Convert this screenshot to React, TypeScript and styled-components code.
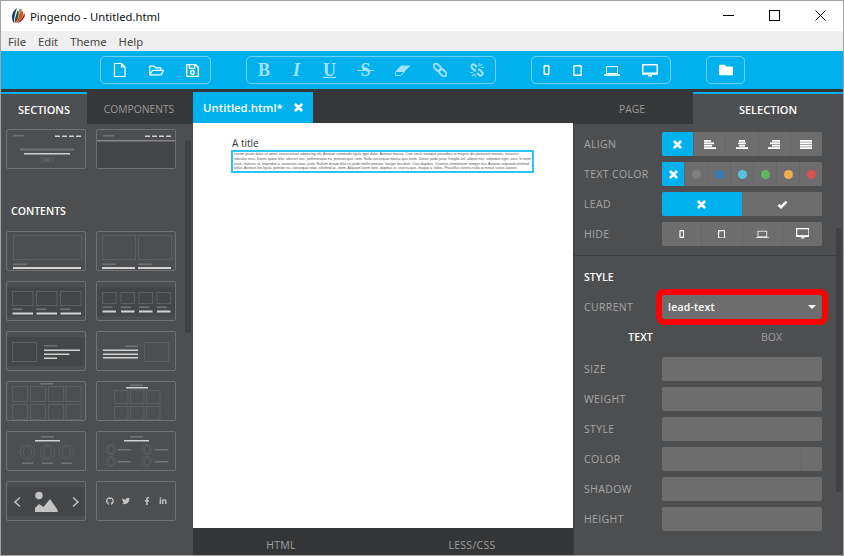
import React from 'react';
import styled, { createGlobalStyle } from 'styled-components';
import { FaFolder, FaGithub, FaFacebookF, FaLinkedinIn, FaRegFolderOpen, FaRegSave, FaTwitter } from 'react-icons/fa';

const GlobalStyle = createGlobalStyle`
  html, body {
    margin: 0;
    padding: 0;
    background: #fff;
  }
  * {
    box-sizing: border-box;
  }
`;

const Window = styled.div`
  width: 844px;
  height: 556px;
  display: flex;
  flex-direction: column;
  overflow: hidden;
  border: 1px solid #a3a3a3;
  font-family: 'Open Sans', sans-serif;
`;

const TitleBar = styled.div`
  height: 30px;
  flex: none;
  display: flex;
  align-items: center;
  background: #fff;
  padding-left: 10px;
  font-family: 'Noto Sans', sans-serif;
  font-size: 11.25px;
  color: #111;
`;

const TitleText = styled.span`
  margin-left: 5px;
  flex: 1;
`;

const WinButton = styled.div`
  width: 46px;
  height: 30px;
  padding-bottom: 2px;
  display: flex;
  align-items: center;
  justify-content: center;
`;

const MenuBar = styled.div`
  height: 20px;
  flex: none;
  display: flex;
  align-items: center;
  gap: 12px;
  padding-left: 7px;
  background: #efefef;
  font-family: 'Noto Sans', sans-serif;
  font-size: 11.25px;
  color: #444;
`;

const Toolbar = styled.div`
  height: 38px;
  flex: none;
  display: flex;
  align-items: center;
  gap: 35px;
  padding-left: 99px;
  background: #00b1ed;
`;

const ToolGroup = styled.div`
  height: 28px;
  display: flex;
  border: 1px solid rgba(255, 255, 255, 0.42);
  border-radius: 5px;
`;

const ToolButton = styled.div<{ $w: number; $off?: boolean }>`
  width: ${p => p.$w}px;
  display: flex;
  align-items: center;
  justify-content: center;
  color: ${p => (p.$off ? '#a3e2f8' : '#fff')};
`;

const SerifGlyph = styled.span<{ $italic?: boolean; $under?: boolean; $strike?: boolean }>`
  position: relative;
  font-family: 'Liberation Serif', serif;
  font-size: 18px;
  line-height: 18px;
  font-weight: 700;
  font-style: ${p => (p.$italic ? 'italic' : 'normal')};
  text-decoration: ${p => (p.$under ? 'underline' : 'none')};
  &::after {
    content: '';
    display: ${p => (p.$strike ? 'block' : 'none')};
    position: absolute;
    left: -3px;
    right: -3px;
    top: 9px;
    height: 1px;
    background: currentColor;
  }
`;

const Main = styled.div`
  flex: 1;
  min-height: 0;
  display: grid;
  grid-template-columns: 192px 380px 270px;
`;

const Column = styled.div`
  position: relative;
  display: flex;
  flex-direction: column;
  min-height: 0;
  background: #4d4e50;
`;

const TabRow = styled.div<{ $h: number }>`
  height: ${p => p.$h}px;
  flex: none;
  display: flex;
  background: #363739;
  padding-top: 3px;
`;

const PanelTab = styled.div<{ $w: number; $active?: boolean }>`
  width: ${p => p.$w}px;
  display: flex;
  align-items: center;
  justify-content: center;
  font-size: ${p => (p.$active ? 11 : 10.3)}px;
  padding: 0 ${p => (p.$active ? 0 : 2)}px ${p => (p.$active ? 0 : 1)}px 0;
  color: ${p => (p.$active ? '#fff' : '#9a9a9a')};
  font-weight: ${p => (p.$active ? 600 : 400)};
  background: ${p => (p.$active ? '#4d4e50' : '#363739')};
  border-top: 2px solid ${p => (p.$active ? '#00b1ed' : '#363739')};
`;

const EditorTab = styled.div`
  width: 120px;
  display: flex;
  align-items: center;
  gap: 11px;
  padding-left: 10px;
  background: #00b1ed;
  color: #fff;
  font-size: 11.4px;
  font-weight: 600;
`;

const ThumbScroll = styled.div`
  padding: 5px 0 0 5px;
`;

const ThumbGrid = styled.div`
  display: grid;
  grid-template-columns: 80px 80px;
  column-gap: 10px;
  row-gap: 10px;
`;

const GroupHeading = styled.div`
  height: 62px;
  display: flex;
  align-items: center;
  padding: 21px 0 0 5px;
  color: #fff;
  font-size: 10.5px;
  font-weight: 600;
`;

const Thumb = styled.div`
  width: 80px;
  height: 40px;
  border: 1px solid #707173;
  border-radius: 2px;
  overflow: hidden;
`;

const ThumbArt = styled.svg`
  display: block;
  width: 78px;
  height: 38px;
`;

const ScrollThumb = styled.div<{ $left: number; $top: number; $h: number }>`
  position: absolute;
  left: ${p => p.$left}px;
  top: ${p => p.$top}px;
  width: 6px;
  height: ${p => p.$h}px;
  border-radius: 3px;
  background: #3f4042;
`;

const Canvas = styled.div`
  flex: 1;
  min-height: 0;
  background: #fff;
  padding: 14px 39px 0 38px;
`;

const PageTitle = styled.div`
  font-size: 10px;
  line-height: 13px;
  padding-left: 1px;
  color: #333;
`;

const LeadText = styled.p`
  margin: 0;
  padding: 0 1px;
  border: 2px solid #2ac4f7;
  font-family: 'Liberation Sans', sans-serif;
  font-size: 3.55px;
  line-height: 4.75px;
  color: #555;
  height: 23px;
`;

const SourceTabs = styled.div`
  height: 27px;
  flex: none;
  display: grid;
  grid-template-columns: 176px 192px;
  column-gap: 7px;
  align-items: end;
  padding-bottom: 3px;
  background: #343537;
  color: #a0a0a0;
  font-size: 10.5px;
  letter-spacing: 0.3px;
  text-align: center;
`;

const SidePanel = styled.div`
  flex: 1;
  min-height: 0;
  border-left: 1px solid #3a3b3d;
  padding: 8px 0 0 10px;
`;

const Rows = styled.div`
  display: flex;
  flex-direction: column;
  gap: 6px;
`;

const Row = styled.div`
  height: 24px;
  display: flex;
  align-items: center;
`;

const Label = styled.div`
  width: 78px;
  flex: none;
  color: #a6a6a6;
  font-size: 10.5px;
  letter-spacing: 0.35px;
`;

const Segments = styled.div`
  width: 160px;
  height: 24px;
  display: flex;
  border-radius: 2px;
  overflow: hidden;
  background: #6d6d6d;
`;

const Segment = styled.div<{ $active?: boolean }>`
  flex: 1;
  display: flex;
  align-items: center;
  justify-content: center;
  color: #fff;
  background: ${p => (p.$active ? '#00b1ed' : '#6d6d6d')};
  border-left: 1px solid ${p => (p.$active ? '#00b1ed' : '#666')};
  &:first-child {
    border-left: 0;
  }
`;

const Dot = styled.span<{ $c: string }>`
  width: 9px;
  height: 9px;
  border-radius: 50%;
  background: ${p => p.$c};
`;

const Divider = styled.div`
  height: 1px;
  background: #3e3f41;
  margin: 9px 0 0 -10px;
`;

const StyleHeading = styled.div`
  color: #fff;
  font-size: 10.5px;
  font-weight: 600;
  margin: 14px 0 10px;
  line-height: 15px;
`;

const SelectBox = styled.div`
  width: 160px;
  height: 24px;
  display: flex;
  align-items: center;
  justify-content: space-between;
  padding: 0 6px;
  border-radius: 2px;
  background: #6d6d6d;
  outline: 6px solid #fe0000;
  color: #fff;
  font-size: 10.5px;
  font-weight: 600;
  letter-spacing: 0.2px;
`;

const Caret = styled.span`
  border-left: 4px solid transparent;
  border-right: 4px solid transparent;
  border-top: 4px solid #fff;
`;

const SubTabs = styled.div`
  display: grid;
  grid-template-columns: 131px 131px;
  height: 38px;
  padding-bottom: 2px;
  align-items: center;
  margin-left: -9px;
  text-align: center;
  font-size: 10.5px;
`;

const SubTab = styled.div<{ $active?: boolean }>`
  color: ${p => (p.$active ? '#fff' : '#a0a0a0')};
  font-weight: ${p => (p.$active ? 600 : 400)};
`;

const Field = styled.div<{ $split?: boolean }>`
  width: 160px;
  height: 24px;
  border-radius: 2px;
  background: #6d6d6d;
  display: flex;
  justify-content: flex-end;
  &::after {
    content: '';
    width: 21px;
    border-left: ${p => (p.$split ? '1px solid #696969' : '0')};
  }
`;

const Svg: React.FC<{ w: number; h: number; s?: number; children: React.ReactNode }> = ({ w, h, s = 1, children }) => (
  <svg width={w * s} height={h * s} viewBox={`0 0 ${w} ${h}`} fill="none" stroke="currentColor">
    {children}
  </svg>
);

const Logo = () => (
  <svg width="14" height="16" viewBox="0 0 14 16" style={{ flex: 'none' }}>
    <path d="M6 0 C3 2 1 5 1 9 C1 12 2 14 3 15 C3 10 4 5 6 0Z" fill="#123a6b" />
    <path d="M7 2 C5 6 4 10 3.5 15 C6 13 7 11 7.5 8 C8 6 8 4 7 2Z" fill="#2a5a3a" />
    <path d="M11 2 C9 3 8 5 8 8 C7 11 6 13 4 15 C8 14 11 11 12 8 C12.5 6 12 4 11 2Z" fill="#d9541e" />
    <path d="M13 5 C12.5 9 10 13 5 15 C9 15 12 12 13.5 9 C14 7.5 13.8 6 13 5Z" fill="#8a1d12" />
    <path d="M8.5 1 C7.8 2 7.8 3.5 8.2 5 C8.8 3.5 9.6 2.4 11 1.5 C10.4 .8 9.4 .6 8.5 1Z" fill="#5aa53a" />
  </svg>
);

const XIcon = () => (
  <Svg w={9} h={9}>
    <path d="M1.7 1.7L7.3 7.3M7.3 1.7L1.7 7.3" strokeWidth="2.7" strokeLinecap="round" />
  </Svg>
);

const CheckIcon = () => (
  <Svg w={11} h={9}>
    <path d="M1.4 4.8L4 7.2L9.6 1.6" strokeWidth="2.5" />
  </Svg>
);

const FileIcon = () => (
  <Svg w={13} h={14}>
    <path d="M1.5 .5H8.5L12 4V13.5H1.5Z M8.5 .5V4H12" strokeWidth="1.2" />
  </Svg>
);

const EraserIcon = () => (
  <svg width="16" height="11" viewBox="0 0 16 11" fill="currentColor">
    <path d="M6 .5H15.5L10 6H.9Z" />
    <path d="M.9 6.5H9.8L5.6 10.5H.5L.2 8Z" fill="none" stroke="currentColor" />
  </svg>
);

const LinkIcon = () => (
  <Svg w={14} h={14}>
    <g strokeWidth="2" transform="rotate(45 7 7)">
      <rect x="-1" y="4.5" width="8" height="5" rx="2.5" />
      <rect x="7" y="4.5" width="8" height="5" rx="2.5" />
    </g>
  </Svg>
);

const UnlinkIcon = () => (
  <Svg w={14} h={14}>
    <g strokeWidth="2">
      <path d="M7 4 L4.8 2 A2 2 0 0 0 2 5 L4 7 A2 2 0 0 0 6 7.5" />
      <path d="M8 6.5 A2 2 0 0 1 10 7 L12 9 A2 2 0 0 1 9.2 12 L7 10" />
    </g>
    <path d="M9 0V3M12 1L10.3 3.2M14 4.5H11M0 9.5H3M2 13L3.7 10.8M5 14V11" strokeWidth="1.1" />
  </Svg>
);

const MobileIcon: React.FC<{ s?: number }> = ({ s }) => (
  <Svg w={7} h={10} s={s}>
    <rect x="1.25" y=".75" width="4.5" height="8.5" strokeWidth="1.5" rx=".6" />
  </Svg>
);

const TabletIcon: React.FC<{ s?: number }> = ({ s }) => (
  <Svg w={9} h={11} s={s}>
    <rect x=".75" y=".75" width="7.5" height="9.5" strokeWidth="1.5" rx=".8" />
  </Svg>
);

const LaptopIcon: React.FC<{ s?: number }> = ({ s }) => (
  <Svg w={16} h={11} s={s}>
    <rect x="2.5" y="1.5" width="11" height="7" strokeWidth="1" />
    <path d="M0 10H16" strokeWidth="1.6" />
  </Svg>
);

const DesktopIcon: React.FC<{ s?: number }> = ({ s }) => (
  <Svg w={16} h={13} s={s}>
    <rect x=".75" y=".75" width="14.5" height="9" strokeWidth="1.5" />
    <path d="M.5 8.5H15.5V10.5H.5ZM6 11H10V12.5H6Z" fill="currentColor" stroke="none" />
  </Svg>
);

const BarsIcon: React.FC<{ rows: [number, number][] }> = ({ rows }) => (
  <svg width="12" height="9" viewBox="0 0 12 9" fill="currentColor">
    {rows.map(([x, w], i) => (
      <rect key={i} x={x} y={i * 2.4} width={w} height="1.8" />
    ))}
  </svg>
);

const alignLeft: [number, number][] = [[0, 7], [0, 10], [0, 8], [0, 12]];
const alignCenter: [number, number][] = [[3, 6], [2, 8], [3, 6], [0, 12]];
const alignRight: [number, number][] = [[4, 8], [2, 10], [4, 8], [0, 12]];
const alignJustify: [number, number][] = [[0, 12], [0, 12], [0, 12], [0, 12]];

const bright = '#d2d2d2';
const mid = '#727375';
const faint = '#5d5e60';

const Bar: React.FC<{ x: number; y: number; w: number; h?: number; c?: string }> = ({ x, y, w, h = 1.5, c = bright }) => (
  <rect x={x} y={y} width={w} height={h} fill={c} />
);

const Box: React.FC<{ x: number; y: number; w: number; h: number }> = ({ x, y, w, h }) => (
  <rect x={x} y={y} width={w} height={h} fill="none" stroke={faint} strokeWidth="1" />
);

const Band: React.FC = () => <rect x="1" y="6" width="78" height="29" fill="#454648" />;

const Nav = () => (
  <>
    <Bar x={7} y={6} w={11} c={mid} />
    {[49, 56, 63, 70].map(x => (
      <Bar key={x} x={x} y={6.5} w={5} />
    ))}
  </>
);

const Face: React.FC<{ cx: number; cy: number; r: number }> = ({ cx, cy, r }) => (
  <g fill="none" stroke={faint}>
    <circle cx={cx} cy={cy} r={r} />
    <ellipse cx={cx} cy={cy} rx={r * 0.55} ry={r * 0.8} />
  </g>
);

const topRow = [
  <>
    <Nav />
    <Bar x={14} y={19.5} w={54} h={2} c={mid} />
    <Bar x={18} y={24} w={46} />
    <Box x={34} y={29} w={13} h={4} />
    <Bar x={37} y={30.5} w={7} h={1} c={mid} />
  </>,
  <>
    <rect x="1" y="11" width="78" height="28" fill="#444547" />
    <Nav />
    <Bar x={1} y={11} w={78} c="#87888a" />
  </>,
];

const contentRows = [
  <>
    <Box x={7.5} y={4.5} w={68} h={24} />
    <Bar x={7} y={32.5} w={14} c={mid} />
    <Bar x={7} y={36} w={68} h={2} />
  </>,
  <>
    <Box x={6.5} y={4.5} w={33} h={24} />
    <Box x={42.5} y={4.5} w={33} h={24} />
    <Bar x={6} y={32.5} w={14} c={mid} />
    <Bar x={42} y={32.5} w={14} c={mid} />
    <Bar x={6} y={36} w={33} h={2} />
    <Bar x={42} y={36} w={33} h={2} />
  </>,
  <>
    <Band />
    {[6.5, 30.5, 54.5].map(x => (
      <g key={x}>
        <Box x={x} y={10.5} w={20.5} h={14} />
        <Bar x={x} y={27.5} w={10} c={mid} />
        <Bar x={x} y={31.5} w={20.5} h={2} />
      </g>
    ))}
  </>,
  <>
    <Band />
    {[6.5, 25, 43, 61].map(x => (
      <g key={x}>
        <Box x={x} y={11.5} w={13.5} h={11} />
        <Bar x={x} y={25.5} w={10} c={mid} />
        <Bar x={x} y={29.5} w={13.5} h={2} />
      </g>
    ))}
  </>,
  <>
    <Band />
    <Box x={6.5} y={11.5} w={24} h={19} />
    <Bar x={38} y={14} w={13} c={mid} />
    <Bar x={38} y={18.5} w={36} />
    <Bar x={38} y={22.5} w={25.5} />
    <Bar x={38} y={26.5} w={13} />
  </>,
  <>
    <Bar x={29} y={14.5} w={13} c={mid} />
    <Bar x={7} y={18.5} w={35} />
    <Bar x={7} y={22.5} w={35} />
    <Bar x={7} y={26} w={35} />
    <Box x={48.5} y={11.5} w={24} h={19} />
  </>,
  <>
    <Bar x={34} y={2} w={13} c={mid} />
    {[6.5, 24.5, 42.5, 60].map(x => (
      <g key={x}>
        <Box x={x} y={5.5} w={15} h={15} />
        <Box x={x} y={23.5} w={15} h={15} />
      </g>
    ))}
  </>,
  <>
    <Bar x={34} y={3.5} w={13} c={mid} />
    <Bar x={30} y={6} w={22} />
    {[18.5, 34.5, 50.5].map(x => (
      <g key={x}>
        <Box x={x} y={9.5} w={13.5} h={13} />
        <Box x={x} y={25.5} w={13.5} h={13} />
      </g>
    ))}
  </>,
  <>
    <Bar x={35} y={5} w={13} c={mid} />
    <Bar x={29} y={9} w={25} />
    {[21.5, 41.5, 60.5].map(x => (
      <Face key={x} cx={x} cy={21} r={7.3} />
    ))}
    <Bar x={16} y={31.5} w={11} c={mid} />
    <Bar x={36} y={31.5} w={11} c={mid} />
    <Bar x={55} y={31.5} w={11} c={mid} />
  </>,
  <>
    <Bar x={34} y={5} w={13} c={mid} />
    <Bar x={28} y={9} w={25} />
    {[18.5, 30.5].map(y => (
      <g key={y}>
        <Face cx={15} cy={y} r={5} />
        <Face cx={51} cy={y} r={5} />
        <Bar x={22} y={y - 0.5} w={13} c={mid} />
        <Bar x={59} y={y - 0.5} w={13} c={mid} />
      </g>
    ))}
  </>,
  <>
    <Band />
    <path d="M14 16.5L9 21L14 25.5M67 16.5L72 21L67 25.5" fill="none" stroke="#c4c4c4" strokeWidth="1.5" />
    <circle cx="33" cy="14.5" r="3.7" fill="#c4c4c4" />
    <path d="M29 31V27L33 23L37.5 26L44 18L51 28L52 31Z" fill="#c4c4c4" />
  </>,
  <g color="#c4c4c4">
    <FaGithub x={10} y={16} size={8} />
    <FaTwitter x={26} y={16} size={8} />
    <FaFacebookF x={47} y={16} size={8} />
    <FaLinkedinIn x={63} y={16} size={8} />
  </g>,
];

const textColors = ['#808080', '#337ab7', '#5bc0de', '#5cb85c', '#f0ad4e', '#d9534f'];
const styleFields = ['SIZE', 'WEIGHT', 'STYLE', 'COLOR', 'SHADOW', 'HEIGHT'];

const lorem =
  'Lorem ipsum dolor sit amet, consectetuer adipiscing elit. Aenean commodo ligula eget dolor. Aenean massa. Cum sociis natoque penatibus et magnis dis parturient montes, nascetur ridiculus mus. Donec quam felis, ultricies nec, pellentesque eu, pretium quis, sem. Nulla consequat massa quis enim. Donec pede justo, fringilla vel, aliquet nec, vulputate eget, arcu. In enim justo, rhoncus ut, imperdiet a, venenatis vitae, justo. Nullam dictum felis eu pede mollis pretium. Integer tincidunt. Cras dapibus. Vivamus elementum semper nisi. Aenean vulputate eleifend tellus. Aenean leo ligula, porttitor eu, consequat vitae, eleifend ac, enim. Aliquam lorem ante, dapibus in, viverra quis, feugiat a, tellus. Phasellus viverra nulla ut metus varius laoreet.';

const thumbs = (items: React.ReactNode[]) =>
  items.map((art, i) => (
    <Thumb key={i}>
      <ThumbArt viewBox="1 1 78 38">{art}</ThumbArt>
    </Thumb>
  ));

const App: React.FC = () => (
  <Window>
    <GlobalStyle />
    <TitleBar>
      <Logo />
      <TitleText>Pingendo - Untitled.html</TitleText>
      <WinButton>
        <svg width="11" height="11" viewBox="0 0 11 11" stroke="#000" fill="none">
          <path d="M0 5.5H11" />
        </svg>
      </WinButton>
      <WinButton>
        <svg width="11" height="11" viewBox="0 0 11 11" stroke="#000" fill="none">
          <rect x=".5" y=".5" width="10" height="10" />
        </svg>
      </WinButton>
      <WinButton>
        <svg width="11" height="11" viewBox="0 0 11 11" stroke="#000" fill="none">
          <path d="M.5 .5L10.5 10.5M10.5 .5L.5 10.5" />
        </svg>
      </WinButton>
    </TitleBar>
    <MenuBar>
      <span>File</span>
      <span>Edit</span>
      <span>Theme</span>
      <span>Help</span>
    </MenuBar>
    <Toolbar>
      <ToolGroup>
        <ToolButton $w={37}><FileIcon /></ToolButton>
        <ToolButton $w={36}><FaRegFolderOpen size={15} /></ToolButton>
        <ToolButton $w={36}><FaRegSave size={15} /></ToolButton>
      </ToolGroup>
      <ToolGroup>
        <ToolButton $w={34} $off><SerifGlyph>B</SerifGlyph></ToolButton>
        <ToolButton $w={31} $off><SerifGlyph $italic>I</SerifGlyph></ToolButton>
        <ToolButton $w={35} $off><SerifGlyph $under>U</SerifGlyph></ToolButton>
        <ToolButton $w={37} $off><SerifGlyph $strike>S</SerifGlyph></ToolButton>
        <ToolButton $w={38} $off><EraserIcon /></ToolButton>
        <ToolButton $w={36} $off><LinkIcon /></ToolButton>
        <ToolButton $w={37} $off><UnlinkIcon /></ToolButton>
      </ToolGroup>
      <ToolGroup>
        <ToolButton $w={29}><MobileIcon /></ToolButton>
        <ToolButton $w={33}><TabletIcon /></ToolButton>
        <ToolButton $w={36}><LaptopIcon /></ToolButton>
        <ToolButton $w={40}><DesktopIcon /></ToolButton>
      </ToolGroup>
      <ToolGroup>
        <ToolButton $w={37}><FaFolder size={14} /></ToolButton>
      </ToolGroup>
    </Toolbar>
    <Main>
      <Column>
        <TabRow $h={35}>
          <PanelTab $w={86} $active>SECTIONS</PanelTab>
          <PanelTab $w={106}>COMPONENTS</PanelTab>
        </TabRow>
        <ThumbScroll>
          <ThumbGrid>{thumbs(topRow)}</ThumbGrid>
          <GroupHeading>CONTENTS</GroupHeading>
          <ThumbGrid>{thumbs(contentRows)}</ThumbGrid>
        </ThumbScroll>
        <ScrollThumb $left={184} $top={51} $h={193} />
      </Column>
      <Column>
        <TabRow $h={34}>
          <EditorTab>
            Untitled.html*
            <XIcon />
          </EditorTab>
        </TabRow>
        <Canvas>
          <PageTitle>A title</PageTitle>
          <LeadText>{lorem}</LeadText>
        </Canvas>
        <SourceTabs>
          <span>HTML</span>
          <span>LESS/CSS</span>
        </SourceTabs>
      </Column>
      <Column>
        <TabRow $h={35}>
          <PanelTab $w={120}>PAGE</PanelTab>
          <PanelTab $w={150} $active>SELECTION</PanelTab>
        </TabRow>
        <SidePanel>
          <Rows>
            <Row>
              <Label>ALIGN</Label>
              <Segments>
                <Segment $active><XIcon /></Segment>
                <Segment><BarsIcon rows={alignLeft} /></Segment>
                <Segment><BarsIcon rows={alignCenter} /></Segment>
                <Segment><BarsIcon rows={alignRight} /></Segment>
                <Segment><BarsIcon rows={alignJustify} /></Segment>
              </Segments>
            </Row>
            <Row>
              <Label>TEXT COLOR</Label>
              <Segments>
                <Segment $active><XIcon /></Segment>
                {textColors.map(c => (
                  <Segment key={c}><Dot $c={c} /></Segment>
                ))}
              </Segments>
            </Row>
            <Row>
              <Label>LEAD</Label>
              <Segments>
                <Segment $active><XIcon /></Segment>
                <Segment><CheckIcon /></Segment>
              </Segments>
            </Row>
            <Row>
              <Label>HIDE</Label>
              <Segments>
                <Segment><MobileIcon s={0.8} /></Segment>
                <Segment><TabletIcon s={0.8} /></Segment>
                <Segment><LaptopIcon s={0.8} /></Segment>
                <Segment><DesktopIcon s={0.85} /></Segment>
              </Segments>
            </Row>
          </Rows>
          <Divider />
          <StyleHeading>STYLE</StyleHeading>
          <Row>
            <Label>CURRENT</Label>
            <SelectBox>
              lead-text
              <Caret />
            </SelectBox>
          </Row>
          <SubTabs>
            <SubTab $active>TEXT</SubTab>
            <SubTab>BOX</SubTab>
          </SubTabs>
          <Rows>
            {styleFields.map(name => (
              <Row key={name}>
                <Label>{name}</Label>
                <Field $split={name === 'COLOR'} />
              </Row>
            ))}
          </Rows>
        </SidePanel>
        <ScrollThumb $left={263} $top={139} $h={264} />
      </Column>
    </Main>
  </Window>
);

export default App;
